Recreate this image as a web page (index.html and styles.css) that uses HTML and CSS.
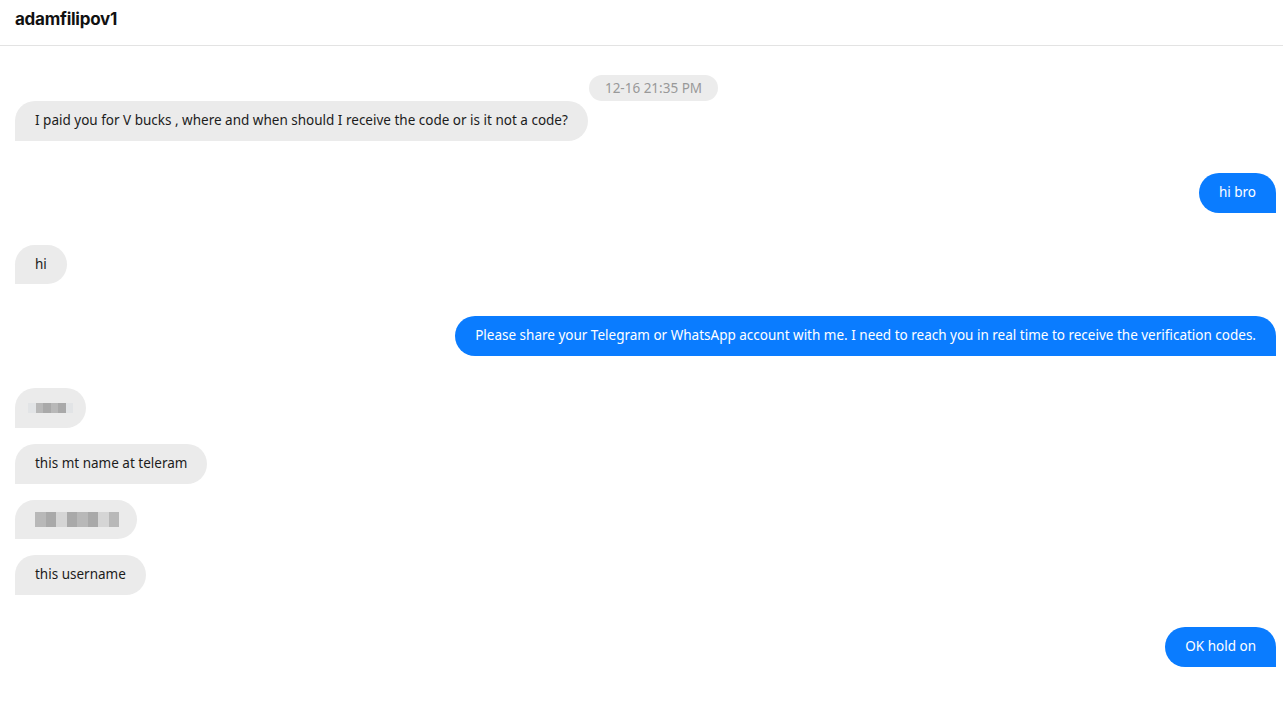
FILE: index.html
```
<!DOCTYPE html>
<html lang="en">
<head>
  <meta charset="UTF-8">
  <meta name="viewport" content="width=device-width, initial-scale=1.0">
  <title>adamfilipov1</title>
  <link rel="stylesheet" href="styles.css">
</head>
<body>
  <header class="topbar">
    <div class="username">adamfilipov1</div>
  </header>

  <main class="chat">
    <div class="time"><span>12-16 21:35 PM</span></div>

    <div class="msg in">I paid you for V bucks , where and when should I receive the code or is it not a code?</div>
    <div class="msg out gap">hi bro</div>
    <div class="msg in gap">hi</div>
    <div class="msg out gap">Please share your Telegram or WhatsApp account with me. I need to reach you in real time to receive the verification codes.</div>

    <!-- pixelated blocks stand in for the hidden text -->
    <div class="msg in gap blur short-b">
      <span class="mosaic short">
        <i class="p0"></i><i class="p2"></i><i class="p3"></i><i class="p2"></i><i class="p3"></i><i class="p0"></i>
      </span>
    </div>
    <div class="msg in">this mt name at teleram</div>
    <div class="msg in blur long-b">
      <span class="mosaic long">
        <i class="p2"></i><i class="p3"></i><i class="p1"></i><i class="p3"></i><i class="p2"></i><i class="p3"></i><i class="p1"></i><i class="p2"></i>
      </span>
    </div>
    <div class="msg in">this username</div>
    <div class="msg out gap">OK hold on</div>
  </main>
</body>
</html>
```

FILE: styles.css
```
html, body {
  margin: 0;
  padding: 0;
  background: #fff;
}
body {
  font-family: "Noto Sans", "Open Sans", Arial, sans-serif;
  color: #1c1c1c;
}
.topbar {
  height: 46px;
  border-bottom: 1px solid #e3e3e3;
  display: flex;
  align-items: center;
  padding: 0 15px;
  box-sizing: border-box;
}
.username {
  font-family: Inter, "Noto Sans", sans-serif;
  font-weight: 700;
  font-size: 17px;
  letter-spacing: -0.25px;
  color: #111;
  margin-top: -7px;
}
.chat {
  display: flex;
  flex-direction: column;
  padding: 29px 7px 20px 15px;
  gap: 16px;
}
.time {
  display: flex;
  justify-content: center;
  padding-left: 16px;
  margin-bottom: -16px;
}
.time span {
  background: #ececec;
  color: #999;
  font-size: 13.5px;
  height: 26px;
  line-height: 26px;
  padding: 0 16px;
  border-radius: 13px;
}
.msg {
  font-size: 13.5px;
  line-height: 19.75px;
  padding: 10px 20px;
  border-radius: 20px;
  max-width: 80%;
  box-sizing: border-box;
}
.msg.gap {
  margin-top: 16px;
}
.in {
  align-self: flex-start;
  background: #ebebeb;
  color: #1c1c1c;
  border-bottom-left-radius: 0;
}
.out {
  align-self: flex-end;
  background: #0a7cff;
  color: #fff;
  border-bottom-right-radius: 0;
}
.blur {
  height: 39.75px;
  display: flex;
  align-items: center;
}
.short-b {
  padding: 0 13px;
}
.long-b {
  padding: 0 18px 0 20px;
}
.mosaic {
  display: flex;
  height: 10px;
}
.mosaic.long {
  height: 15px;
}
.mosaic i {
  display: block;
  height: 100%;
}
.mosaic.short i {
  width: 7.5px;
}
.mosaic.long i {
  width: 10.5px;
}
.p0 { background: #e2e4e6; }
.p1 { background: #d5d5d5; }
.p2 { background: #b8b8b8; }
.p3 { background: #a9a9a9; }
```
